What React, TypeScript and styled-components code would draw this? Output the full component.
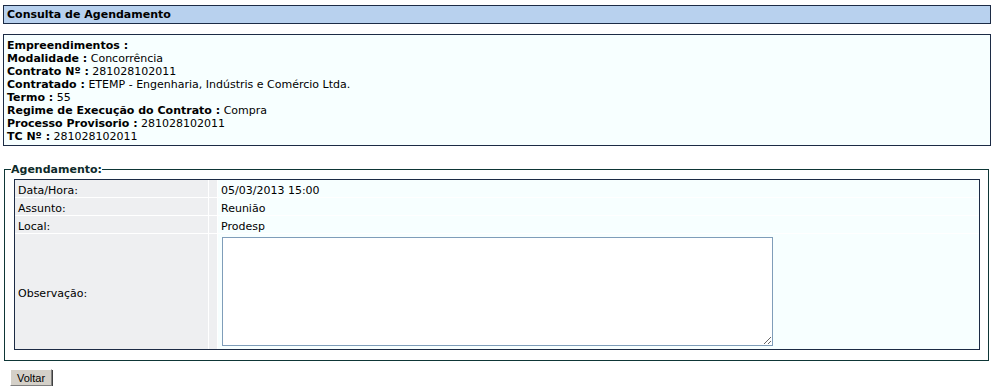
import styled, { createGlobalStyle } from "styled-components";

const GlobalStyle = createGlobalStyle`
  body {
    margin: 0;
    background: #ffffff;
    color: #000000;
    font-family: "DejaVu Sans", Verdana, sans-serif;
    font-size: 11px;
  }
`;

const contrato = [
  { label: "Empreendimentos", value: "" },
  { label: "Modalidade", value: "Concorrência" },
  { label: "Contrato Nº", value: "281028102011" },
  { label: "Contratado", value: "ETEMP - Engenharia, Indústris e Comércio Ltda." },
  { label: "Termo", value: "55" },
  { label: "Regime de Execução do Contrato", value: "Compra" },
  { label: "Processo Provisorio", value: "281028102011" },
  { label: "TC Nº", value: "281028102011" },
];

const agendamento = [
  { label: "Data/Hora:", value: "05/03/2013 15:00" },
  { label: "Assunto:", value: "Reunião" },
  { label: "Local:", value: "Prodesp" },
];

const App = () => {
  return (
    <Page>
      <GlobalStyle />
      <TitleBar>Consulta de Agendamento</TitleBar>

      <InfoBox>
        {contrato.map((item) => (
          <InfoLine key={item.label}>
            <b>{item.label} :</b> {item.value}
          </InfoLine>
        ))}
      </InfoBox>

      <Fieldset>
        <Legend>Agendamento:</Legend>
        <DataGrid>
          {agendamento.map((row) => (
            <Row key={row.label} $height={17}>
              <LabelCell>{row.label}</LabelCell>
              <SpacerCell />
              <ValueCell $shift={3}>{row.value}</ValueCell>
            </Row>
          ))}
          <Row $height={115}>
            <LabelCell>Observação:</LabelCell>
            <SpacerCell />
            <ValueCell $shift={0}>
              <Observacao />
            </ValueCell>
          </Row>
        </DataGrid>
      </Fieldset>

      <BackButton type="button">Voltar</BackButton>
    </Page>
  );
};

export default App;

const Page = styled("div")({
  padding: "5px 4px 0 3px",
});

const TitleBar = styled("div")({
  height: 17,
  lineHeight: "17px",
  paddingLeft: 3,
  border: "1px solid #1c2b45",
  backgroundColor: "#b8d1ee",
  fontWeight: "bold",
});

const InfoBox = styled("div")({
  marginTop: 10,
  padding: "4px 3px 2px",
  border: "1px solid #1c2b45",
  backgroundColor: "#f7ffff",
  lineHeight: "13px",
});

const InfoLine = styled("div")({
  whiteSpace: "nowrap",
});

const Fieldset = styled("fieldset")({
  margin: "17px 2px 0 1px",
  padding: "3px 8px 10px 9px",
  border: "1px solid #0e3636",
  minWidth: 0,
});

const Legend = styled("legend")({
  marginLeft: -3,
  padding: 0,
  fontWeight: "bold",
  lineHeight: "13px",
  color: "#0e2a2a",
});

const DataGrid = styled("div")({
  display: "grid",
  rowGap: 1,
  border: "1px solid #1c2b45",
  backgroundColor: "#ffffff",
});

const Row = styled("div")<{ $height: number }>(({ $height }) => ({
  display: "grid",
  gridTemplateColumns: "193px 8px 1fr",
  columnGap: 1,
  height: $height,
}));

const LabelCell = styled("div")({
  display: "flex",
  alignItems: "center",
  paddingLeft: 3,
  paddingTop: 3,
  backgroundColor: "#eeeff1",
});

const SpacerCell = styled("div")({
  backgroundColor: "#eeeff1",
});

const ValueCell = styled("div")<{ $shift: number }>(({ $shift }) => ({
  display: "flex",
  alignItems: "center",
  paddingLeft: 3,
  paddingTop: $shift,
  backgroundColor: "#f7ffff",
}));

const Observacao = styled("textarea")({
  boxSizing: "border-box",
  width: 551,
  height: 109,
  margin: "0 0 0 1px",
  border: "1px solid #7f9db9",
  backgroundColor: "#ffffff",
  fontFamily: "inherit",
  fontSize: 11,
});

const BackButton = styled("button")({
  display: "block",
  marginTop: 8,
  marginLeft: 7,
  height: 17,
  width: 42,
  padding: 0,
  fontFamily: '"Liberation Sans", Arial, sans-serif',
  fontSize: 11,
  color: "#000000",
  backgroundColor: "#d4d0c8",
  borderStyle: "solid",
  borderWidth: 1,
  borderColor: "#ffffff #808080 #808080 #ffffff",
  boxShadow: "1px 1px 0 #404040",
});
